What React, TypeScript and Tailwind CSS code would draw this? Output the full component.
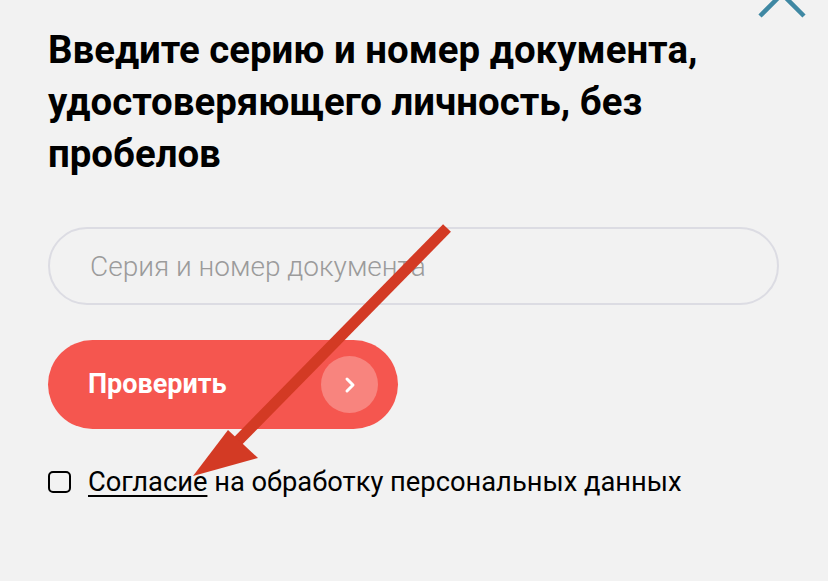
import { useState } from "react";

const CloseIcon = () => (
  <svg className="absolute right-[22px] top-[-30px] h-[48px] w-[48px]" viewBox="0 0 48 48" fill="none">
    <path d="M2 2 L46 46 M46 2 L2 46" stroke="#3f88a3" strokeWidth="4.5" />
  </svg>
);

const Annotation = () => (
  <svg className="pointer-events-none absolute left-0 top-0 h-[581px] w-[828px]" viewBox="0 0 828 581" fill="none">
    <path d="M447 228 L232 447" stroke="#d33a24" strokeWidth="11" />
    <path d="M193 476 L228 430 L258 458 Z" fill="#d33a24" />
  </svg>
);

export default function App() {
  const [agree, setAgree] = useState(false);

  return (
    <div className="relative h-[581px] w-[828px] overflow-hidden bg-[#f2f2f2] font-['Roboto',sans-serif]">
      <CloseIcon />
      <div className="flex flex-col px-12 pt-[24px]">
        <h1 className="max-w-[670px] text-[38.4px] font-bold leading-[52px] text-black">
          Введите серию и номер документа, удостоверяющего личность, без пробелов
        </h1>

        <input
          type="text"
          placeholder="Серия и номер документа"
          className="mt-[47px] h-[78px] w-[731px] rounded-full border-2 border-[#dcdce3] bg-transparent px-[40px] text-[28px] font-light text-black outline-none placeholder:text-[#9b9b9b]"
        />

        <button className="mt-[35px] flex h-[89px] w-[350px] items-center justify-between rounded-full bg-[#f5564f] pl-[40px] pr-[20px]">
          <span className="text-[27px] font-bold text-white">Проверить</span>
          <span className="flex h-[57px] w-[57px] items-center justify-center rounded-full bg-[#f8847e]">
            <svg width="20" height="20" viewBox="0 0 20 20" fill="none">
              <path d="M7 4 L13 10 L7 16" stroke="#fff" strokeWidth="3" strokeLinecap="round" strokeLinejoin="round" />
            </svg>
          </span>
        </button>

        <label className="mt-[37px] flex items-center gap-[17px] text-[27.3px] leading-[32px] text-black">
          <span
            onClick={() => setAgree(!agree)}
            className={`h-[22px] w-[23px] shrink-0 rounded-[5px] border-2 border-black ${agree ? "bg-black" : "bg-transparent"}`}
          />
          <span>
            <span className="underline underline-offset-4">Согласие</span> на обработку персональных данных
          </span>
        </label>
      </div>
      <Annotation />
    </div>
  );
}
